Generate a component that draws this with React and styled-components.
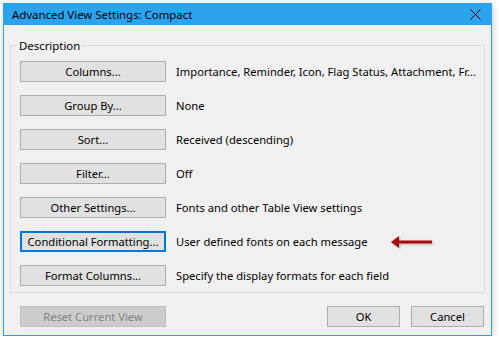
import React from "react";
import styled, { createGlobalStyle } from "styled-components";

const Global = createGlobalStyle`
  html, body { margin: 0; padding: 0; background: #ffffff; }
  body { font-family: "Noto Sans", "Open Sans", sans-serif; }
`;

const Page = styled.div`
  padding: 3px 0 0 3px;
`;

const Window = styled.div`
  width: 487px;
  height: 331px;
  border: 1px solid #2ba3ee;
  background: #f0f0f0;
  display: flex;
  flex-direction: column;
  box-shadow: 1px 1px 6px rgba(0, 0, 0, 0.22);
`;

const TitleBar = styled.div`
  height: 29px;
  background: #2ba3ee;
  display: flex;
  align-items: center;
  justify-content: space-between;
  padding: 0 10px 0 8px;
  color: #000;
`;

const Title = styled.span`
  font-size: 11.4px;
  padding-bottom: 1px;
`;

const Body = styled.div`
  flex: 1;
  display: flex;
  flex-direction: column;
  padding: 13px 6px 8px 6px;
`;

const Group = styled.fieldset`
  margin: 0;
  min-inline-size: 0;
  border: 1px solid #dcdcdc;
  padding: 8px 9px 6px 9px;
  display: flex;
  flex-direction: column;
  gap: 13px;
`;

const Legend = styled.legend`
  padding: 0 2px;
  margin-left: -3px;
  font-size: 11.4px;
  line-height: 15px;
  color: #000;
`;

const Row = styled.div`
  display: flex;
  align-items: center;
  gap: 10px;
`;

const Button = styled.button`
  box-sizing: border-box;
  width: ${(p) => p.$w || 146}px;
  height: 21px;
  padding: 0;
  font-family: "Noto Sans", "Open Sans", sans-serif;
  font-size: 11.2px;
  line-height: 1;
  color: ${(p) => (p.disabled ? "#838383" : "#000")};
  background: ${(p) => (p.disabled ? "#cccccc" : "#e1e1e1")};
  border: ${(p) => (p.$focus ? "2px solid #0078d7" : p.disabled ? "1px solid #bfbfbf" : "1px solid #adadad")};
  display: flex;
  align-items: center;
  justify-content: center;
  flex-shrink: 0;
`;

const Desc = styled.span`
  font-size: 11.2px;
  color: #000;
  white-space: nowrap;
`;

const Arrow = styled.svg`
  margin-left: 14px;
  flex-shrink: 0;
  filter: drop-shadow(1px 1px 1px rgba(0,0,0,0.25));
`;

const Footer = styled.div`
  margin-top: 13px;
  display: flex;
  align-items: center;
  padding: 0 1px 0 10px;
`;

const Spacer = styled.div`
  flex: 1;
`;

const FooterButtons = styled.div`
  display: flex;
  gap: 11px;
`;

const rows = [
  { label: "Columns...", desc: "Importance, Reminder, Icon, Flag Status, Attachment, Fr..." },
  { label: "Group By...", desc: "None" },
  { label: "Sort...", desc: "Received (descending)" },
  { label: "Filter...", desc: "Off" },
  { label: "Other Settings...", desc: "Fonts and other Table View settings" },
  { label: "Conditional Formatting...", desc: "User defined fonts on each message", focus: true, arrow: true },
  { label: "Format Columns...", desc: "Specify the display formats for each field" },
];

export default function App() {
  return (
    <Page>
      <Global />
      <Window>
        <TitleBar>
          <Title>Advanced View Settings: Compact</Title>
          <svg width="11" height="11" viewBox="0 0 11 11">
            <path d="M0.5 0.5 L10.5 10.5 M10.5 0.5 L0.5 10.5" stroke="#000" strokeWidth="1" fill="none" />
          </svg>
        </TitleBar>
        <Body>
          <Group>
            <Legend>Description</Legend>
            {rows.map((r) => (
              <Row key={r.label}>
                <Button $focus={r.focus}>{r.label}</Button>
                <Desc>{r.desc}</Desc>
                {r.arrow && (
                  <Arrow width="42" height="14" viewBox="0 0 42 14">
                    <polygon points="0,7 8,1 8,13" fill="#a90d0d" />
                    <rect x="7" y="5.5" width="34" height="3" fill="#a90d0d" />
                  </Arrow>
                )}
              </Row>
            ))}
          </Group>
          <Footer>
            <Button disabled>Reset Current View</Button>
            <Spacer />
            <FooterButtons>
              <Button $w={73}>OK</Button>
              <Button $w={73}>Cancel</Button>
            </FooterButtons>
          </Footer>
        </Body>
      </Window>
    </Page>
  );
}
